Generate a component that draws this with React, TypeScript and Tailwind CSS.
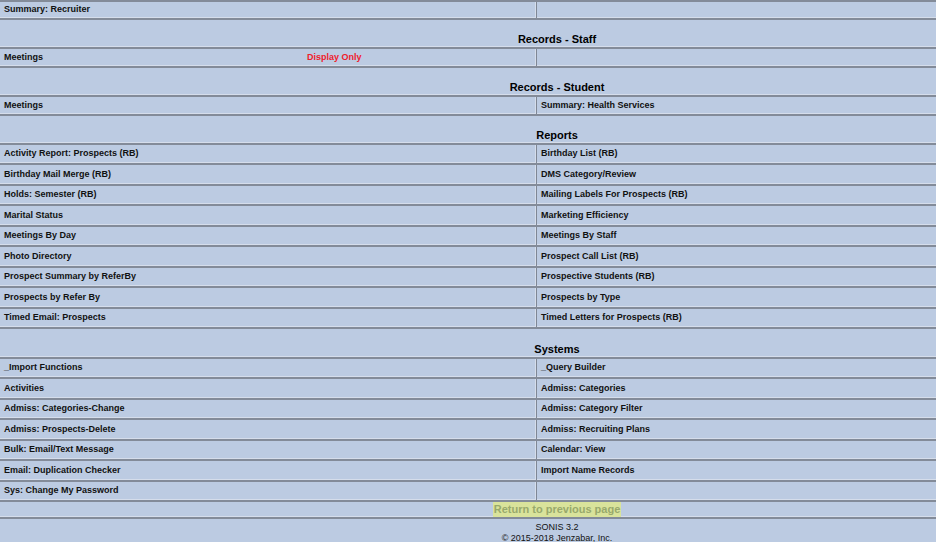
const FONT = { fontFamily: '"Liberation Sans", Arial, sans-serif' };

type Row = { left?: string; right?: string; note?: string; h: string };

const REPORTS: [string, string][] = [
  ["Activity Report: Prospects (RB)", "Birthday List (RB)"],
  ["Birthday Mail Merge (RB)", "DMS Category/Review"],
  ["Holds: Semester (RB)", "Mailing Labels For Prospects (RB)"],
  ["Marital Status", "Marketing Efficiency"],
  ["Meetings By Day", "Meetings By Staff"],
  ["Photo Directory", "Prospect Call List (RB)"],
  ["Prospect Summary by ReferBy", "Prospective Students (RB)"],
  ["Prospects by Refer By", "Prospects by Type"],
  ["Timed Email: Prospects", "Timed Letters for Prospects (RB)"],
];

const SYSTEMS: [string, string][] = [
  ["_Import Functions", "_Query Builder"],
  ["Activities", "Admiss: Categories"],
  ["Admiss: Categories-Change", "Admiss: Category Filter"],
  ["Admiss: Prospects-Delete", "Admiss: Recruiting Plans"],
  ["Bulk: Email/Text Message", "Calendar: View"],
  ["Email: Duplication Checker", "Import Name Records"],
  ["Sys: Change My Password", ""],
];

const HEIGHTS = ["h-[20px]", "h-[21px]"];

function ItemRow({ left, right, note, h }: Row) {
  return (
    <div
      className={`grid grid-cols-[536px_1fr] border-t-2 border-[#838b99] shadow-[inset_0_-1px_0_#d5ddeb] ${h}`}
    >
      <div className="flex items-center pl-[4px] shadow-[inset_-1px_0_0_#d5ddeb]">
        <span className="w-[303px] text-[9px] font-bold text-[#111]">{left}</span>
        {note && <span className="text-[9px] font-bold text-[#f0202c]">{note}</span>}
      </div>
      <div className="flex items-center border-l border-[#7f8795] pl-[4px] text-[9px] font-bold text-[#111]">
        {right}
      </div>
    </div>
  );
}

function Header({ title, h }: { title: string; h: string }) {
  return (
    <div
      className={`flex items-end justify-center border-t-2 border-[#838b99] pb-[1px] shadow-[inset_0_-1px_0_#d5ddeb] ${h}`}
    >
      <span className="text-[11px] font-bold leading-[13px] text-black">{title}</span>
    </div>
  );
}

export default function App() {
  return (
    <div className="w-[936px] h-[542px] overflow-hidden bg-[#bccbe2]" style={FONT}>
      <div className="w-[1114px]">
        <ItemRow left="Summary: Recruiter" h="h-[18px]" />
        <Header title="Records - Staff" h="h-[29px]" />
        <ItemRow left="Meetings" note="Display Only" h="h-[19px]" />
        <Header title="Records - Student" h="h-[29px]" />
        <ItemRow left="Meetings" right="Summary: Health Services" h="h-[19px]" />
        <Header title="Reports" h="h-[29px]" />
        {REPORTS.map(([l, r], i) => (
          <ItemRow key={l} left={l} right={r} h={HEIGHTS[i % 2]} />
        ))}
        <Header title="Systems" h="h-[30px]" />
        {SYSTEMS.map(([l, r], i) => (
          <ItemRow key={l} left={l} right={r} h={HEIGHTS[i % 2]} />
        ))}

        {/* return link */}
        <div className="flex h-[17px] items-center justify-center border-t-2 border-[#838b99] shadow-[inset_0_-1px_0_#d5ddeb]">
          <span className="bg-[#d9e39b] px-[1px] text-[11px] font-bold leading-[15px] text-[#98a96c]">
            Return to previous page
          </span>
        </div>

        {/* footer */}
        <div className="border-t-2 border-[#838b99] pt-[3px] text-center text-[9px] leading-[11px] text-[#111]">
          <div>SONIS 3.2</div>
          <div>© 2015-2018 Jenzabar, Inc.</div>
        </div>
      </div>
    </div>
  );
}
